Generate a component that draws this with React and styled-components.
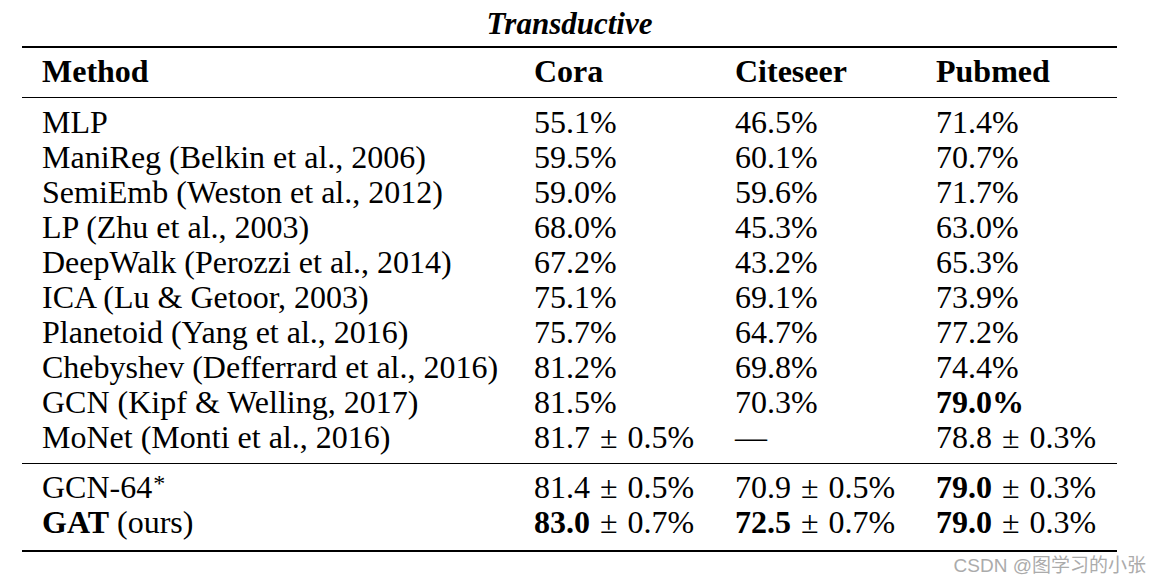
import React from 'react';
import styled, { createGlobalStyle } from 'styled-components';

const GlobalStyle = createGlobalStyle`
  html, body {
    margin: 0;
    padding: 0;
    background: #fff;
  }
  body {
    width: 1160px;
    height: 582px;
    overflow: hidden;
    font-family: "Liberation Serif", "Times New Roman", serif;
    color: #000;
  }
`;

const Page = styled.div`
  position: relative;
  width: 1160px;
  height: 582px;
  padding: 6px 0 0 22px;
  box-sizing: border-box;
`;

const Caption = styled.div`
  width: 1095px;
  text-align: center;
  font-size: 31px;
  font-weight: bold;
  font-style: italic;
  line-height: 35px;
`;

const Table = styled.div`
  width: 1095px;
  margin-top: 5px;
  border-top: 2px solid #000;
  border-bottom: 2px solid #000;
`;

const Section = styled.div`
  display: grid;
  grid-template-columns: 492px 201px 201px 201px;
  padding: ${(p) => p.$pad};
  border-top: ${(p) => (p.$rule ? '1.5px solid #000' : 'none')};
  font-size: 32px;
  line-height: 35px;
`;

const Cell = styled.div`
  padding: 0 20px;
  white-space: nowrap;
  font-weight: ${(p) => (p.$bold ? 'bold' : 'normal')};
`;

const B = styled.b`
  font-weight: bold;
`;

const Pm = styled.span`
  margin: 0 2px;
`;

const Star = styled.span`
  font-size: 24px;
  vertical-align: 7px;
  line-height: 0;
  margin-left: 1px;
`;

const Watermark = styled.div`
  position: absolute;
  right: 14px;
  top: 550px;
  font-family: "Liberation Sans", "Noto Sans CJK SC", sans-serif;
  font-size: 19px;
  color: #ababab;
`;

// value with a ± error, optionally bold mean
const Val = ({ m, e, bold }) => (
  <>{bold ? <B>{m}</B> : m} <Pm>±</Pm> {e}</>
);

const rows = [
  ['MLP', '55.1%', '46.5%', '71.4%'],
  ['ManiReg (Belkin et al., 2006)', '59.5%', '60.1%', '70.7%'],
  ['SemiEmb (Weston et al., 2012)', '59.0%', '59.6%', '71.7%'],
  ['LP (Zhu et al., 2003)', '68.0%', '45.3%', '63.0%'],
  ['DeepWalk (Perozzi et al., 2014)', '67.2%', '43.2%', '65.3%'],
  ['ICA (Lu & Getoor, 2003)', '75.1%', '69.1%', '73.9%'],
  ['Planetoid (Yang et al., 2016)', '75.7%', '64.7%', '77.2%'],
  ['Chebyshev (Defferrard et al., 2016)', '81.2%', '69.8%', '74.4%'],
  ['GCN (Kipf & Welling, 2017)', '81.5%', '70.3%', <B key="b">79.0%</B>],
  ['MoNet (Monti et al., 2016)', <Val key="a" m="81.7" e="0.5%" />, '—', <Val key="c" m="78.8" e="0.3%" />],
];

export default function App() {
  return (
    <Page>
      <GlobalStyle />
      <Caption>Transductive</Caption>
      <Table>
        <Section $pad="6px 0 8px">
          <Cell $bold>Method</Cell>
          <Cell $bold>Cora</Cell>
          <Cell $bold>Citeseer</Cell>
          <Cell $bold>Pubmed</Cell>
        </Section>
        <Section $rule $pad="7px 0 8px">
          {rows.map((r, i) => (
            <React.Fragment key={i}>
              {r.map((c, j) => (
                <Cell key={j}>{c}</Cell>
              ))}
            </React.Fragment>
          ))}
        </Section>
        <Section $rule $pad="6px 0 10px">
          <Cell>GCN-64<Star>*</Star></Cell>
          <Cell><Val m="81.4" e="0.5%" /></Cell>
          <Cell><Val m="70.9" e="0.5%" /></Cell>
          <Cell><Val m="79.0" e="0.3%" bold /></Cell>
          <Cell><B>GAT</B> (ours)</Cell>
          <Cell><Val m="83.0" e="0.7%" bold /></Cell>
          <Cell><Val m="72.5" e="0.7%" bold /></Cell>
          <Cell><Val m="79.0" e="0.3%" bold /></Cell>
        </Section>
      </Table>
      <Watermark>CSDN @图学习的小张</Watermark>
    </Page>
  );
}
